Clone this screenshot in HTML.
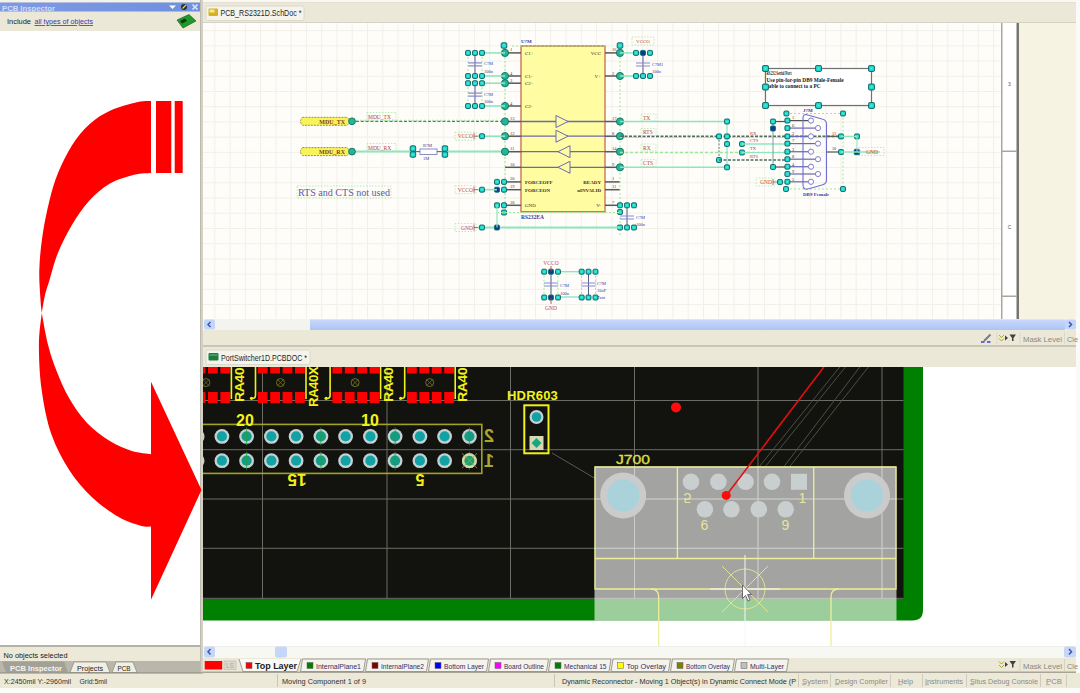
<!DOCTYPE html>
<html><head><meta charset="utf-8">
<style>
html,body{margin:0;padding:0;width:1080px;height:693px;overflow:hidden;background:#ece9d8;}
svg{display:block;font-family:"Liberation Sans",sans-serif;}
</style></head>
<body>
<svg width="1080" height="693" viewBox="0 0 1080 693">
<defs>
  <pattern id="sgrid" x="199.35" y="15.4" width="15.45" height="15.2" patternUnits="userSpaceOnUse">
    <rect width="15.45" height="15.2" fill="#fdfcf7"/>
    <path d="M15.45 0V15.2M0 15.2H15.45" stroke="#f2f0e8" stroke-width="1" fill="none"/>
  </pattern>
  <linearGradient id="titleg" x1="0" y1="0" x2="1" y2="0">
    <stop offset="0" stop-color="#7d9ae3"/><stop offset="1" stop-color="#6f8fe0"/>
  </linearGradient>
  <linearGradient id="thumbg" x1="0" y1="0" x2="0" y2="1"><stop offset="0" stop-color="#c8d8fb"/><stop offset="1" stop-color="#adc4f4"/></linearGradient>
</defs>

<!-- ===== base ===== -->
<rect x="0" y="0" width="1080" height="693" fill="#ece9d8"/>

<!-- ===== LEFT PANEL ===== -->
<rect x="0" y="0" width="200" height="2" fill="#f4f2ea"/>
<rect x="0" y="2.5" width="200" height="9.5" fill="url(#titleg)"/>
<text x="2" y="10.5" font-size="7.5" font-weight="bold" fill="#d4ddf8" textLength="53" lengthAdjust="spacingAndGlyphs">PCB Inspector</text>
<rect x="0" y="11.5" width="200" height="20" fill="#ebe8d8"/>
<rect x="0" y="31" width="200" height="614" fill="#ffffff"/>
<rect x="0" y="645" width="200" height="2" fill="#b5b2a5"/>
<rect x="0" y="647" width="200" height="14" fill="#ece9d8"/>
<rect x="0" y="661" width="200" height="12" fill="#b9b7ab"/>
<rect x="0" y="673" width="1080" height="15" fill="#ece9d8"/>
<rect x="0" y="688" width="1080" height="5" fill="#fbfbf8"/>

<!-- divider -->
<rect x="200" y="0" width="3" height="673" fill="#d4d1c4"/><rect x="200" y="0" width="1" height="673" fill="#bdbab0"/>

<!-- ===== SCHEMATIC DOC ===== -->
<rect x="203" y="0" width="877" height="2.5" fill="#f8f7f2"/>
<rect x="203" y="2.5" width="873" height="1.2" fill="#d5d2c4"/>
<rect x="203" y="3" width="873" height="19.5" fill="#ebe8d8"/>
<rect x="203" y="22" width="873" height="1" fill="#d6d3c6"/>
<rect x="203" y="23" width="799" height="296" fill="#fefdfa"/>
<path d="M214.80 23V319M230.07 23V319M245.34 23V319M260.61 23V319M275.88 23V319M291.15 23V319M306.42 23V319M321.69 23V319M336.96 23V319M352.23 23V319M367.50 23V319M382.77 23V319M398.04 23V319M413.31 23V319M428.58 23V319M443.85 23V319M459.12 23V319M474.39 23V319M489.66 23V319M504.93 23V319M520.20 23V319M535.47 23V319M550.74 23V319M566.01 23V319M581.28 23V319M596.55 23V319M611.82 23V319M627.09 23V319M642.36 23V319M657.63 23V319M672.90 23V319M688.17 23V319M703.44 23V319M718.71 23V319M733.98 23V319M749.25 23V319M764.52 23V319M779.79 23V319M795.06 23V319M810.33 23V319M825.60 23V319M840.87 23V319M856.14 23V319M871.41 23V319M886.68 23V319M901.95 23V319M917.22 23V319M932.49 23V319M947.76 23V319M963.03 23V319M978.30 23V319M993.57 23V319M203 30.60H1001M203 45.82H1001M203 61.04H1001M203 76.26H1001M203 91.48H1001M203 106.70H1001M203 121.92H1001M203 137.14H1001M203 152.36H1001M203 167.58H1001M203 182.80H1001M203 198.02H1001M203 213.24H1001M203 228.46H1001M203 243.68H1001M203 258.90H1001M203 274.12H1001M203 289.34H1001M203 304.56H1001" stroke="#f2f0e8" stroke-width="1" fill="none"/>
<rect x="1002" y="23" width="15" height="296" fill="#ffffff"/>
<rect x="1001" y="23" width="1.5" height="296" fill="#a8a8a0"/>
<rect x="1016.5" y="23" width="2.5" height="296" fill="#767670"/>
<rect x="1019" y="23" width="57" height="296" fill="#f6f3e2"/>
<rect x="1002" y="150.5" width="15" height="1.5" fill="#a8a8a0"/>
<rect x="1002" y="295.5" width="15" height="1.5" fill="#a8a8a0"/>
<rect x="1076" y="0" width="4" height="673" fill="#fafaf8"/>

<!-- scrollbar -->
<rect x="203" y="319" width="873" height="11" fill="#f3f3ef"/>
<rect x="310" y="319.5" width="755" height="10.5" fill="url(#thumbg)"/>
<rect x="204" y="319.5" width="11" height="10" rx="2" fill="#c3d5f9"/>
<rect x="1065" y="319.5" width="11" height="10" rx="2" fill="#c3d5f9"/>
<defs><radialGradient id="hg" cx="0.5" cy="0.5" r="0.6"><stop offset="0" stop-color="#3ef2e6"/><stop offset="0.6" stop-color="#22d2c6"/><stop offset="1" stop-color="#0e9c94"/></radialGradient></defs>
<path d="M302.5 117.3H347L351 121.3L347 125.3H302.5Q298.5 121.3 302.5 117.3Z" fill="#f7f35a" stroke="#a09040" stroke-width="1" stroke-dasharray="2 1"/>
<text x="345" y="123.5" font-size="6" fill="#8a3a1a" text-anchor="end" font-family="Liberation Serif" font-weight="bold">MDU_TX</text>
<path d="M302.5 147.6H347L351 151.6L347 155.6H302.5Q298.5 151.6 302.5 147.6Z" fill="#f7f35a" stroke="#a09040" stroke-width="1" stroke-dasharray="2 1"/>
<text x="345" y="153.79999999999998" font-size="6" fill="#8a3a1a" text-anchor="end" font-family="Liberation Serif" font-weight="bold">MDU_RX</text>
<circle cx="352" cy="121.3" r="3.4" fill="#27b49a" stroke="#0a6f5a" stroke-width="0.9"/>
<circle cx="352" cy="151.6" r="3.4" fill="#27b49a" stroke="#0a6f5a" stroke-width="0.9"/>
<line x1="356" y1="121.4" x2="505" y2="121.4" stroke="#5d7d6c" stroke-width="1.4" stroke-dasharray="3 1.8"/>
<line x1="356" y1="120.3" x2="505" y2="120.3" stroke="#9ee89a" stroke-width="1" stroke-dasharray="2 2"/>
<line x1="356" y1="151.6" x2="413" y2="151.6" stroke="#8ee6c0" stroke-width="2"/>
<line x1="445" y1="151.6" x2="505" y2="151.6" stroke="#8ee6c0" stroke-width="2"/>
<text x="368" y="119" font-size="5.5" fill="#b8402e" text-anchor="start" font-family="Liberation Serif">MDU_TX</text>
<text x="368" y="150" font-size="5.5" fill="#b8402e" text-anchor="start" font-family="Liberation Serif">MDU_RX</text>
<rect x="367" y="112.5" width="29" height="7.5" fill="none" stroke="#a6e8a0" stroke-width="0.8" stroke-dasharray="1.5 1.5"/>
<rect x="367" y="143.5" width="29" height="7.5" fill="none" stroke="#a6e8a0" stroke-width="0.8" stroke-dasharray="1.5 1.5"/>
<rect x="420" y="149" width="17" height="5.5" fill="#ffffff" stroke="#8080c0" stroke-width="0.9"/>
<line x1="413" y1="151.6" x2="420" y2="151.6" stroke="#606060" stroke-width="1"/>
<line x1="437" y1="151.6" x2="445" y2="151.6" stroke="#606060" stroke-width="1"/>
<rect x="410.2" y="145.8" width="5.5" height="5.5" rx="1.2" fill="url(#hg)" stroke="#0a6a66" stroke-width="0.9"/>
<rect x="410.2" y="151.8" width="5.5" height="5.5" rx="1.2" fill="url(#hg)" stroke="#0a6a66" stroke-width="0.9"/>
<rect x="442.2" y="145.8" width="5.5" height="5.5" rx="1.2" fill="url(#hg)" stroke="#0a6a66" stroke-width="0.9"/>
<rect x="442.2" y="151.8" width="5.5" height="5.5" rx="1.2" fill="url(#hg)" stroke="#0a6a66" stroke-width="0.9"/>
<text x="423" y="146.5" font-size="4.5" fill="#3a3aa0" text-anchor="start" font-family="Liberation Serif">R?M</text>
<text x="423" y="160" font-size="4.5" fill="#3a3aa0" text-anchor="start" font-family="Liberation Serif">1M</text>
<rect x="521" y="46" width="84" height="165.7" fill="#fffca2" stroke="#c87858" stroke-width="1.4"/>
<line x1="512" y1="46" x2="605" y2="46" stroke="#9ee89a" stroke-width="1" stroke-dasharray="2 2"/>
<line x1="521" y1="46" x2="605" y2="46" stroke="#b0a040" stroke-width="1.2" stroke-dasharray="2 2"/>
<text x="521" y="42.5" font-size="5" fill="#3a3aa0" text-anchor="start" font-family="Liberation Serif" font-weight="bold">U?M</text>
<text x="521" y="219" font-size="5.5" fill="#3a3aa0" text-anchor="start" font-family="Liberation Serif" font-weight="bold">RS232EA</text>
<line x1="505" y1="52.9" x2="521" y2="52.9" stroke="#585858" stroke-width="1.5"/>
<text x="510" y="51.4" font-size="4.5" fill="#404040" text-anchor="start" font-family="Liberation Serif">1</text>
<text x="525" y="54.9" font-size="5" fill="#303030" text-anchor="start" font-family="Liberation Serif">C1+</text>
<line x1="505" y1="76" x2="521" y2="76" stroke="#585858" stroke-width="1.5"/>
<text x="510" y="74.5" font-size="4.5" fill="#404040" text-anchor="start" font-family="Liberation Serif">4</text>
<text x="525" y="78" font-size="5" fill="#303030" text-anchor="start" font-family="Liberation Serif">C1-</text>
<line x1="505" y1="83.2" x2="521" y2="83.2" stroke="#585858" stroke-width="1.5"/>
<text x="510" y="81.7" font-size="4.5" fill="#404040" text-anchor="start" font-family="Liberation Serif">3</text>
<text x="525" y="85.2" font-size="5" fill="#303030" text-anchor="start" font-family="Liberation Serif">C2+</text>
<line x1="505" y1="106" x2="521" y2="106" stroke="#585858" stroke-width="1.5"/>
<text x="510" y="104.5" font-size="4.5" fill="#404040" text-anchor="start" font-family="Liberation Serif">4</text>
<text x="525" y="108" font-size="5" fill="#303030" text-anchor="start" font-family="Liberation Serif">C2-</text>
<line x1="505" y1="121.5" x2="521" y2="121.5" stroke="#585858" stroke-width="1.5"/>
<text x="510" y="120.0" font-size="4.5" fill="#404040" text-anchor="start" font-family="Liberation Serif">13</text>
<line x1="505" y1="136.2" x2="521" y2="136.2" stroke="#585858" stroke-width="1.5"/>
<text x="510" y="134.7" font-size="4.5" fill="#404040" text-anchor="start" font-family="Liberation Serif">12</text>
<line x1="505" y1="151.7" x2="521" y2="151.7" stroke="#585858" stroke-width="1.5"/>
<text x="510" y="150.2" font-size="4.5" fill="#404040" text-anchor="start" font-family="Liberation Serif">11</text>
<line x1="505" y1="167.3" x2="521" y2="167.3" stroke="#585858" stroke-width="1.5"/>
<text x="510" y="165.8" font-size="4.5" fill="#404040" text-anchor="start" font-family="Liberation Serif">10</text>
<line x1="505" y1="181.9" x2="521" y2="181.9" stroke="#585858" stroke-width="1.5"/>
<text x="510" y="180.4" font-size="4.5" fill="#404040" text-anchor="start" font-family="Liberation Serif">20</text>
<text x="525" y="183.9" font-size="5" fill="#303030" text-anchor="start" font-family="Liberation Serif" font-weight="bold">FORCEOFF</text>
<line x1="505" y1="189.7" x2="521" y2="189.7" stroke="#585858" stroke-width="1.5"/>
<text x="510" y="188.2" font-size="4.5" fill="#404040" text-anchor="start" font-family="Liberation Serif">19</text>
<text x="525" y="191.7" font-size="5" fill="#303030" text-anchor="start" font-family="Liberation Serif" font-weight="bold">FORCEON</text>
<line x1="505" y1="205.3" x2="521" y2="205.3" stroke="#585858" stroke-width="1.5"/>
<text x="510" y="203.8" font-size="4.5" fill="#404040" text-anchor="start" font-family="Liberation Serif">18</text>
<text x="525" y="207.3" font-size="5" fill="#303030" text-anchor="start" font-family="Liberation Serif">GND</text>
<line x1="605" y1="52.9" x2="620" y2="52.9" stroke="#585858" stroke-width="1.5"/>
<text x="612" y="51.4" font-size="4.5" fill="#404040" text-anchor="start" font-family="Liberation Serif">16</text>
<text x="601" y="54.9" font-size="5" fill="#303030" text-anchor="end" font-family="Liberation Serif">VCC</text>
<line x1="605" y1="76" x2="620" y2="76" stroke="#585858" stroke-width="1.5"/>
<text x="612" y="74.5" font-size="4.5" fill="#404040" text-anchor="start" font-family="Liberation Serif">2</text>
<text x="601" y="78" font-size="5" fill="#303030" text-anchor="end" font-family="Liberation Serif">V+</text>
<line x1="605" y1="121.5" x2="620" y2="121.5" stroke="#585858" stroke-width="1.5"/>
<text x="612" y="120.0" font-size="4.5" fill="#404040" text-anchor="start" font-family="Liberation Serif">17</text>
<line x1="605" y1="136.2" x2="620" y2="136.2" stroke="#585858" stroke-width="1.5"/>
<text x="612" y="134.7" font-size="4.5" fill="#404040" text-anchor="start" font-family="Liberation Serif">8</text>
<line x1="605" y1="151.7" x2="620" y2="151.7" stroke="#585858" stroke-width="1.5"/>
<text x="612" y="150.2" font-size="4.5" fill="#404040" text-anchor="start" font-family="Liberation Serif">14</text>
<line x1="605" y1="167.3" x2="620" y2="167.3" stroke="#585858" stroke-width="1.5"/>
<text x="612" y="165.8" font-size="4.5" fill="#404040" text-anchor="start" font-family="Liberation Serif">9</text>
<line x1="605" y1="181.9" x2="620" y2="181.9" stroke="#585858" stroke-width="1.5"/>
<text x="612" y="180.4" font-size="4.5" fill="#404040" text-anchor="start" font-family="Liberation Serif">1</text>
<text x="601" y="183.9" font-size="5" fill="#303030" text-anchor="end" font-family="Liberation Serif" font-weight="bold">READY</text>
<line x1="605" y1="189.7" x2="620" y2="189.7" stroke="#585858" stroke-width="1.5"/>
<text x="612" y="188.2" font-size="4.5" fill="#404040" text-anchor="start" font-family="Liberation Serif">11</text>
<text x="601" y="191.7" font-size="5" fill="#303030" text-anchor="end" font-family="Liberation Serif" font-weight="bold">nINVALID</text>
<line x1="605" y1="205.3" x2="620" y2="205.3" stroke="#585858" stroke-width="1.5"/>
<text x="612" y="203.8" font-size="4.5" fill="#404040" text-anchor="start" font-family="Liberation Serif">7</text>
<text x="601" y="207.3" font-size="5" fill="#303030" text-anchor="end" font-family="Liberation Serif">V-</text>
<line x1="521" y1="121.5" x2="605" y2="121.5" stroke="#6a6ab0" stroke-width="1.3"/>
<line x1="521" y1="136.2" x2="605" y2="136.2" stroke="#6a6ab0" stroke-width="1.3"/>
<line x1="521" y1="151.7" x2="605" y2="151.7" stroke="#6a6ab0" stroke-width="1.3"/>
<line x1="521" y1="167.3" x2="605" y2="167.3" stroke="#6a6ab0" stroke-width="1.3"/>
<path d="M556 115.5L568 121.5L556 127.5Z" fill="#fffca2" stroke="#6a6ab0" stroke-width="1"/>
<path d="M556 130.2L568 136.2L556 142.2Z" fill="#fffca2" stroke="#6a6ab0" stroke-width="1"/>
<path d="M570 145.7L558 151.7L570 157.7Z" fill="#fffca2" stroke="#6a6ab0" stroke-width="1"/>
<path d="M570 161.3L558 167.3L570 173.3Z" fill="#fffca2" stroke="#6a6ab0" stroke-width="1"/>
<line x1="505" y1="45" x2="505" y2="215" stroke="#9ee89a" stroke-width="1" stroke-dasharray="2 2"/>
<line x1="620" y1="45" x2="620" y2="235" stroke="#9ee89a" stroke-width="1" stroke-dasharray="2 2"/>
<rect x="501.2" y="42.7" width="5.6" height="5.6" rx="1.2" fill="url(#hg)" stroke="#0a6a66" stroke-width="0.9"/>
<circle cx="505" cy="52.9" r="3.6" fill="#27b49a" stroke="#0a6f5a" stroke-width="0.9"/>
<circle cx="505" cy="76" r="3.6" fill="#27b49a" stroke="#0a6f5a" stroke-width="0.9"/>
<circle cx="505" cy="83.2" r="3.6" fill="#27b49a" stroke="#0a6f5a" stroke-width="0.9"/>
<circle cx="505" cy="106" r="3.6" fill="#27b49a" stroke="#0a6f5a" stroke-width="0.9"/>
<circle cx="505" cy="121.5" r="3.6" fill="#27b49a" stroke="#0a6f5a" stroke-width="0.9"/>
<circle cx="505" cy="136.2" r="3.6" fill="#27b49a" stroke="#0a6f5a" stroke-width="0.9"/>
<circle cx="505" cy="151.7" r="3.6" fill="#27b49a" stroke="#0a6f5a" stroke-width="0.9"/>
<rect x="494.5" y="179.4" width="5.0" height="5.0" rx="1.2" fill="url(#hg)" stroke="#0a6a66" stroke-width="0.9"/>
<rect x="501.5" y="179.4" width="5.0" height="5.0" rx="1.2" fill="url(#hg)" stroke="#0a6a66" stroke-width="0.9"/>
<rect x="494.5" y="187.2" width="5.0" height="5.0" rx="1.2" fill="#0b3d8a" stroke="#0a6f78" stroke-width="0.9"/>
<rect x="501.5" y="187.2" width="5.0" height="5.0" rx="1.2" fill="url(#hg)" stroke="#0a6a66" stroke-width="0.9"/>
<rect x="494.5" y="202.8" width="5.0" height="5.0" rx="1.2" fill="url(#hg)" stroke="#0a6a66" stroke-width="0.9"/>
<rect x="501.5" y="202.8" width="5.0" height="5.0" rx="1.2" fill="url(#hg)" stroke="#0a6a66" stroke-width="0.9"/>
<rect x="501.5" y="210.0" width="5.0" height="5.0" rx="1.2" fill="url(#hg)" stroke="#0a6a66" stroke-width="0.9"/>
<rect x="617.2" y="42.7" width="5.6" height="5.6" rx="1.2" fill="url(#hg)" stroke="#0a6a66" stroke-width="0.9"/>
<circle cx="620" cy="52.9" r="3.6" fill="#27b49a" stroke="#0a6f5a" stroke-width="0.9"/>
<circle cx="620" cy="76" r="3.6" fill="#27b49a" stroke="#0a6f5a" stroke-width="0.9"/>
<circle cx="620" cy="121.5" r="3.6" fill="#27b49a" stroke="#0a6f5a" stroke-width="0.9"/>
<circle cx="620" cy="136.2" r="3.6" fill="#27b49a" stroke="#0a6f5a" stroke-width="0.9"/>
<circle cx="620" cy="151.7" r="3.6" fill="#27b49a" stroke="#0a6f5a" stroke-width="0.9"/>
<circle cx="620" cy="167.3" r="3.6" fill="#27b49a" stroke="#0a6f5a" stroke-width="0.9"/>
<rect x="617.5" y="202.8" width="5.0" height="5.0" rx="1.2" fill="url(#hg)" stroke="#0a6a66" stroke-width="0.9"/>
<line x1="482" y1="52.9" x2="505" y2="52.9" stroke="#8ee6c0" stroke-width="1.6"/>
<line x1="482" y1="76" x2="505" y2="76" stroke="#8ee6c0" stroke-width="1.6"/>
<line x1="475" y1="52.9" x2="475" y2="76" stroke="#5a5a8a" stroke-width="1"/>
<path d="M468 62.95H482M468 65.95H482" stroke="#8888d8" stroke-width="1.2"/>
<line x1="468" y1="52.9" x2="468" y2="76" stroke="#9ee89a" stroke-width="1" stroke-dasharray="2 2"/>
<line x1="482" y1="52.9" x2="482" y2="76" stroke="#9ee89a" stroke-width="1" stroke-dasharray="2 2"/>
<rect x="465.5" y="50.4" width="5.0" height="5.0" rx="1.2" fill="url(#hg)" stroke="#0a6a66" stroke-width="0.9"/>
<rect x="472.5" y="50.4" width="5.0" height="5.0" rx="1.2" fill="url(#hg)" stroke="#0a6a66" stroke-width="0.9"/>
<rect x="479.5" y="50.4" width="5.0" height="5.0" rx="1.2" fill="url(#hg)" stroke="#0a6a66" stroke-width="0.9"/>
<rect x="465.5" y="73.5" width="5.0" height="5.0" rx="1.2" fill="url(#hg)" stroke="#0a6a66" stroke-width="0.9"/>
<rect x="472.5" y="73.5" width="5.0" height="5.0" rx="1.2" fill="url(#hg)" stroke="#0a6a66" stroke-width="0.9"/>
<rect x="479.5" y="73.5" width="5.0" height="5.0" rx="1.2" fill="url(#hg)" stroke="#0a6a66" stroke-width="0.9"/>
<text x="484" y="65.45" font-size="4.5" fill="#3a3aa0" text-anchor="start" font-family="Liberation Serif">C?M</text>
<text x="484" y="72.95" font-size="4.5" fill="#3a3aa0" text-anchor="start" font-family="Liberation Serif">100n</text>
<line x1="482" y1="83.2" x2="505" y2="83.2" stroke="#8ee6c0" stroke-width="1.6"/>
<line x1="482" y1="106" x2="505" y2="106" stroke="#8ee6c0" stroke-width="1.6"/>
<line x1="475" y1="83.2" x2="475" y2="106" stroke="#5a5a8a" stroke-width="1"/>
<path d="M468 93.1H482M468 96.1H482" stroke="#8888d8" stroke-width="1.2"/>
<line x1="468" y1="83.2" x2="468" y2="106" stroke="#9ee89a" stroke-width="1" stroke-dasharray="2 2"/>
<line x1="482" y1="83.2" x2="482" y2="106" stroke="#9ee89a" stroke-width="1" stroke-dasharray="2 2"/>
<rect x="465.5" y="80.7" width="5.0" height="5.0" rx="1.2" fill="url(#hg)" stroke="#0a6a66" stroke-width="0.9"/>
<rect x="472.5" y="80.7" width="5.0" height="5.0" rx="1.2" fill="url(#hg)" stroke="#0a6a66" stroke-width="0.9"/>
<rect x="479.5" y="80.7" width="5.0" height="5.0" rx="1.2" fill="url(#hg)" stroke="#0a6a66" stroke-width="0.9"/>
<rect x="465.5" y="103.5" width="5.0" height="5.0" rx="1.2" fill="url(#hg)" stroke="#0a6a66" stroke-width="0.9"/>
<rect x="472.5" y="103.5" width="5.0" height="5.0" rx="1.2" fill="url(#hg)" stroke="#0a6a66" stroke-width="0.9"/>
<rect x="479.5" y="103.5" width="5.0" height="5.0" rx="1.2" fill="url(#hg)" stroke="#0a6a66" stroke-width="0.9"/>
<text x="484" y="95.6" font-size="4.5" fill="#3a3aa0" text-anchor="start" font-family="Liberation Serif">C?M</text>
<text x="484" y="103.1" font-size="4.5" fill="#3a3aa0" text-anchor="start" font-family="Liberation Serif">100n</text>
<line x1="620" y1="52.9" x2="643" y2="52.9" stroke="#8ee6c0" stroke-width="1.6"/>
<line x1="620" y1="76" x2="643" y2="76" stroke="#8ee6c0" stroke-width="1.6"/>
<line x1="643" y1="52.9" x2="643" y2="76" stroke="#5a5a8a" stroke-width="1"/>
<path d="M636 63H650M636 66H650" stroke="#8888d8" stroke-width="1.2"/>
<rect x="633.5" y="50.4" width="5.0" height="5.0" rx="1.2" fill="url(#hg)" stroke="#0a6a66" stroke-width="0.9"/>
<rect x="640.5" y="50.4" width="5.0" height="5.0" rx="1.2" fill="#0b3d8a" stroke="#0a6f78" stroke-width="0.9"/>
<rect x="647.5" y="50.4" width="5.0" height="5.0" rx="1.2" fill="url(#hg)" stroke="#0a6a66" stroke-width="0.9"/>
<rect x="633.5" y="73.5" width="5.0" height="5.0" rx="1.2" fill="url(#hg)" stroke="#0a6a66" stroke-width="0.9"/>
<rect x="640.5" y="73.5" width="5.0" height="5.0" rx="1.2" fill="url(#hg)" stroke="#0a6a66" stroke-width="0.9"/>
<rect x="647.5" y="73.5" width="5.0" height="5.0" rx="1.2" fill="url(#hg)" stroke="#0a6a66" stroke-width="0.9"/>
<text x="652" y="66" font-size="4.5" fill="#3a3aa0" text-anchor="start" font-family="Liberation Serif">C?M1</text>
<text x="652" y="73" font-size="4.5" fill="#3a3aa0" text-anchor="start" font-family="Liberation Serif">100n</text>
<text x="643" y="43" font-size="5" fill="#c04a3a" text-anchor="middle" font-family="Liberation Serif">VCCO</text>
<rect x="632" y="37" width="22" height="8" fill="none" stroke="#a6e8a0" stroke-width="0.8" stroke-dasharray="1.5 1.5"/>
<line x1="627" y1="205.3" x2="627" y2="227.5" stroke="#5a5a8a" stroke-width="1"/>
<path d="M620 216H634M620 219H634" stroke="#8888d8" stroke-width="1.2"/>
<rect x="624.5" y="202.8" width="5.0" height="5.0" rx="1.2" fill="url(#hg)" stroke="#0a6a66" stroke-width="0.9"/>
<rect x="631.5" y="202.8" width="5.0" height="5.0" rx="1.2" fill="url(#hg)" stroke="#0a6a66" stroke-width="0.9"/>
<rect x="617.5" y="209.5" width="5.0" height="5.0" rx="1.2" fill="url(#hg)" stroke="#0a6a66" stroke-width="0.9"/>
<rect x="617.5" y="225.0" width="5.0" height="5.0" rx="1.2" fill="url(#hg)" stroke="#0a6a66" stroke-width="0.9"/>
<rect x="624.5" y="225.0" width="5.0" height="5.0" rx="1.2" fill="url(#hg)" stroke="#0a6a66" stroke-width="0.9"/>
<rect x="631.5" y="225.0" width="5.0" height="5.0" rx="1.2" fill="url(#hg)" stroke="#0a6a66" stroke-width="0.9"/>
<text x="636" y="219" font-size="4.5" fill="#3a3aa0" text-anchor="start" font-family="Liberation Serif">C?M</text>
<text x="636" y="226" font-size="4.5" fill="#3a3aa0" text-anchor="start" font-family="Liberation Serif">100n</text>
<rect x="455" y="132.2" width="21" height="8" fill="none" stroke="#a6e8a0" stroke-width="0.8" stroke-dasharray="1.5 1.5"/>
<text x="473" y="138.2" font-size="5.5" fill="#c04a3a" text-anchor="end" font-family="Liberation Serif">VCCO</text>
<path d="M474 133.2V139.2M474 136.2H479" stroke="#a04a3a" stroke-width="0.8" fill="none"/>
<line x1="478" y1="136.2" x2="505" y2="136.2" stroke="#8ee6c0" stroke-width="1.6"/>
<rect x="479.5" y="133.7" width="5.0" height="5.0" rx="1.2" fill="url(#hg)" stroke="#0a6a66" stroke-width="0.9"/>
<rect x="455" y="185.7" width="21" height="8" fill="none" stroke="#a6e8a0" stroke-width="0.8" stroke-dasharray="1.5 1.5"/>
<text x="473" y="191.7" font-size="5.5" fill="#c04a3a" text-anchor="end" font-family="Liberation Serif">VCCO</text>
<path d="M474 186.7V192.7M474 189.7H479" stroke="#a04a3a" stroke-width="0.8" fill="none"/>
<line x1="478" y1="189.7" x2="497" y2="189.7" stroke="#8ee6c0" stroke-width="1.6"/>
<rect x="479.5" y="187.2" width="5.0" height="5.0" rx="1.2" fill="url(#hg)" stroke="#0a6a66" stroke-width="0.9"/>
<rect x="455" y="223.5" width="21" height="8" fill="none" stroke="#a6e8a0" stroke-width="0.8" stroke-dasharray="1.5 1.5"/>
<text x="473" y="229.5" font-size="5.5" fill="#c04a3a" text-anchor="end" font-family="Liberation Serif">GND</text>
<path d="M474 224.5V230.5M474 227.5H479" stroke="#a04a3a" stroke-width="0.8" fill="none"/>
<line x1="478" y1="227.5" x2="620" y2="227.5" stroke="#8ee6c0" stroke-width="1.8"/>
<rect x="479.5" y="225.0" width="5.0" height="5.0" rx="1.2" fill="url(#hg)" stroke="#0a6a66" stroke-width="0.9"/>
<rect x="494.5" y="225.0" width="5.0" height="5.0" rx="1.2" fill="#0b3d8a" stroke="#0a6f78" stroke-width="0.9"/>
<line x1="497" y1="205.3" x2="497" y2="227.5" stroke="#8ee6c0" stroke-width="1.2"/>
<line x1="497" y1="212.5" x2="620" y2="212.5" stroke="#9ee89a" stroke-width="1" stroke-dasharray="2 2"/>
<text x="298" y="196" font-size="11" fill="#5660a4" font-family="Liberation Serif" textLength="92" lengthAdjust="spacingAndGlyphs">RTS and CTS not used</text>
<rect x="297" y="186" width="94" height="12" fill="none" stroke="#a6e8a0" stroke-width="0.8" stroke-dasharray="1.5 1.5"/>
<line x1="620" y1="121.5" x2="727" y2="121.5" stroke="#8ee6c0" stroke-width="1.6"/>
<line x1="620" y1="136.4" x2="840" y2="136.4" stroke="#4d6d5d" stroke-width="1.6" stroke-dasharray="3 1.5"/>
<line x1="620" y1="137.5" x2="840" y2="137.5" stroke="#9ee89a" stroke-width="1" stroke-dasharray="2 2"/>
<line x1="620" y1="152.5" x2="742" y2="152.5" stroke="#9ee89a" stroke-width="1.4" stroke-dasharray="3 2"/>
<line x1="620" y1="167.3" x2="727" y2="167.3" stroke="#8ee6c0" stroke-width="1.6"/>
<text x="643" y="119.5" font-size="5.5" fill="#b8402e" text-anchor="start" font-family="Liberation Serif">TX</text>
<text x="643" y="134" font-size="5.5" fill="#b8402e" text-anchor="start" font-family="Liberation Serif">RTS</text>
<text x="643" y="149.5" font-size="5.5" fill="#b8402e" text-anchor="start" font-family="Liberation Serif">RX</text>
<text x="643" y="165" font-size="5.5" fill="#b8402e" text-anchor="start" font-family="Liberation Serif">CTS</text>
<rect x="641" y="114" width="15" height="7" fill="none" stroke="#a6e8a0" stroke-width="0.7" stroke-dasharray="1.5 1.5"/>
<rect x="641" y="128.5" width="15" height="7" fill="none" stroke="#a6e8a0" stroke-width="0.7" stroke-dasharray="1.5 1.5"/>
<rect x="641" y="144" width="15" height="7" fill="none" stroke="#a6e8a0" stroke-width="0.7" stroke-dasharray="1.5 1.5"/>
<rect x="641" y="159.5" width="15" height="7" fill="none" stroke="#a6e8a0" stroke-width="0.7" stroke-dasharray="1.5 1.5"/>
<line x1="727" y1="121.5" x2="727" y2="167.3" stroke="#8ee6c0" stroke-width="1.2"/>
<line x1="719" y1="136.4" x2="719" y2="160" stroke="#5d7d6c" stroke-width="1" stroke-dasharray="2 1.5"/>
<rect x="724.5" y="119.0" width="5.0" height="5.0" rx="1.2" fill="url(#hg)" stroke="#0a6a66" stroke-width="0.9"/>
<rect x="716.5" y="133.9" width="5.0" height="5.0" rx="1.2" fill="url(#hg)" stroke="#0a6a66" stroke-width="0.9"/>
<rect x="724.5" y="133.9" width="5.0" height="5.0" rx="1.2" fill="url(#hg)" stroke="#0a6a66" stroke-width="0.9"/>
<rect x="724.5" y="141.5" width="5.0" height="5.0" rx="1.2" fill="url(#hg)" stroke="#0a6a66" stroke-width="0.9"/>
<rect x="739.5" y="141.5" width="5.0" height="5.0" rx="1.2" fill="url(#hg)" stroke="#0a6a66" stroke-width="0.9"/>
<rect x="739.5" y="150.0" width="5.0" height="5.0" rx="1.2" fill="url(#hg)" stroke="#0a6a66" stroke-width="0.9"/>
<rect x="716.5" y="157.5" width="5.0" height="5.0" rx="1.2" fill="url(#hg)" stroke="#0a6a66" stroke-width="0.9"/>
<rect x="724.5" y="164.8" width="5.0" height="5.0" rx="1.2" fill="url(#hg)" stroke="#0a6a66" stroke-width="0.9"/>
<line x1="742" y1="144" x2="788" y2="144" stroke="#8ee6c0" stroke-width="1.6"/>
<line x1="742" y1="152.5" x2="788" y2="152.5" stroke="#9ee89a" stroke-width="1.6" stroke-dasharray="3 2"/>
<line x1="742" y1="152.5" x2="788" y2="152.5" stroke="#8ee6c0" stroke-width="1.0"/>
<line x1="719" y1="160" x2="788" y2="160" stroke="#4d6d5d" stroke-width="1.6" stroke-dasharray="3 1.5"/>
<line x1="773" y1="121.5" x2="787" y2="121.5" stroke="#505050" stroke-width="1.2"/>
<line x1="773" y1="167" x2="787" y2="167" stroke="#505050" stroke-width="1.2"/>
<text x="750" y="134.5" font-size="4.6" fill="#b8402e" text-anchor="start" font-family="Liberation Serif">RX</text>
<text x="750" y="142" font-size="4.6" fill="#b8402e" text-anchor="start" font-family="Liberation Serif">CTS</text>
<text x="750" y="150" font-size="4.6" fill="#b8402e" text-anchor="start" font-family="Liberation Serif">TX</text>
<text x="750" y="157.5" font-size="4.6" fill="#b8402e" text-anchor="start" font-family="Liberation Serif">RTS</text>
<line x1="773" y1="121.5" x2="773" y2="167" stroke="#7aa0a0" stroke-width="1"/>
<rect x="770.5" y="119.0" width="5.0" height="5.0" rx="1.2" fill="url(#hg)" stroke="#0a6a66" stroke-width="0.9"/>
<rect x="770.5" y="126.0" width="5.0" height="5.0" rx="1.2" fill="#0b3d8a" stroke="#0a6f78" stroke-width="0.9"/>
<rect x="770.5" y="164.5" width="5.0" height="5.0" rx="1.2" fill="url(#hg)" stroke="#0a6a66" stroke-width="0.9"/>
<rect x="756" y="178" width="19" height="8" fill="none" stroke="#a6e8a0" stroke-width="0.8" stroke-dasharray="1.5 1.5"/>
<text x="772" y="184" font-size="5.5" fill="#c04a3a" text-anchor="end" font-family="Liberation Serif">GND</text>
<path d="M773 179V185M773 182H778" stroke="#a04a3a" stroke-width="0.8" fill="none"/>
<line x1="775" y1="182" x2="787" y2="182" stroke="#8ee6c0" stroke-width="1.4"/>
<rect x="777.5" y="179.5" width="5.0" height="5.0" rx="1.2" fill="url(#hg)" stroke="#0a6a66" stroke-width="0.9"/>
<rect x="765.5" y="68.5" width="106" height="37" fill="#ffffff" stroke="#707070" stroke-width="1.2"/>
<text x="766.5" y="75" font-size="6" fill="#181818" font-family="Liberation Serif" font-weight="bold" textLength="25" lengthAdjust="spacingAndGlyphs">RS232 Serial Port</text>
<text x="766.5" y="81.5" font-size="6" fill="#181818" font-family="Liberation Serif" font-weight="bold" textLength="77" lengthAdjust="spacingAndGlyphs">Use pin-for-pin DB9 Male-Female</text>
<text x="766.5" y="88" font-size="6" fill="#181818" font-family="Liberation Serif" font-weight="bold" textLength="54" lengthAdjust="spacingAndGlyphs">cable to connect to a PC</text>
<rect x="762.5" y="65.5" width="6" height="6" rx="1.2" fill="url(#hg)" stroke="#0a6a66" stroke-width="0.9"/>
<rect x="815.5" y="65.5" width="6" height="6" rx="1.2" fill="url(#hg)" stroke="#0a6a66" stroke-width="0.9"/>
<rect x="868.5" y="65.5" width="6" height="6" rx="1.2" fill="url(#hg)" stroke="#0a6a66" stroke-width="0.9"/>
<rect x="762.5" y="84.0" width="6" height="6" rx="1.2" fill="url(#hg)" stroke="#0a6a66" stroke-width="0.9"/>
<rect x="868.5" y="84.0" width="6" height="6" rx="1.2" fill="url(#hg)" stroke="#0a6a66" stroke-width="0.9"/>
<rect x="762.5" y="102.5" width="6" height="6" rx="1.2" fill="url(#hg)" stroke="#0a6a66" stroke-width="0.9"/>
<rect x="815.5" y="102.5" width="6" height="6" rx="1.2" fill="url(#hg)" stroke="#0a6a66" stroke-width="0.9"/>
<rect x="868.5" y="102.5" width="6" height="6" rx="1.2" fill="url(#hg)" stroke="#0a6a66" stroke-width="0.9"/>
<line x1="786" y1="113.5" x2="843" y2="113.5" stroke="#9ee89a" stroke-width="1" stroke-dasharray="2 2"/>
<line x1="786" y1="189" x2="843" y2="189" stroke="#9ee89a" stroke-width="1" stroke-dasharray="2 2"/>
<line x1="843" y1="113.5" x2="843" y2="189" stroke="#9ee89a" stroke-width="1" stroke-dasharray="2 2"/>
<line x1="787" y1="120.6" x2="808.5" y2="120.6" stroke="#505050" stroke-width="1.2"/>
<circle cx="811" cy="120.6" r="2.6" fill="#ffffff" stroke="#7070d0" stroke-width="0.9"/>
<text x="792" y="119.39999999999999" font-size="4.2" fill="#303030" text-anchor="start" font-family="Liberation Serif">1</text>
<line x1="787" y1="128.1" x2="815.5" y2="128.1" stroke="#6a6ab0" stroke-width="1.2"/>
<circle cx="818" cy="128.1" r="2.6" fill="#ffffff" stroke="#7070d0" stroke-width="0.9"/>
<text x="792" y="126.89999999999999" font-size="4.2" fill="#303030" text-anchor="start" font-family="Liberation Serif">6</text>
<line x1="787" y1="136.4" x2="808.5" y2="136.4" stroke="#6a6ab0" stroke-width="1.2"/>
<circle cx="811" cy="136.4" r="2.6" fill="#ffffff" stroke="#7070d0" stroke-width="0.9"/>
<text x="792" y="135.20000000000002" font-size="4.2" fill="#303030" text-anchor="start" font-family="Liberation Serif">2</text>
<line x1="787" y1="143.6" x2="815.5" y2="143.6" stroke="#6a6ab0" stroke-width="1.2"/>
<circle cx="818" cy="143.6" r="2.6" fill="#ffffff" stroke="#7070d0" stroke-width="0.9"/>
<text x="792" y="142.4" font-size="4.2" fill="#303030" text-anchor="start" font-family="Liberation Serif">7</text>
<line x1="787" y1="151.7" x2="808.5" y2="151.7" stroke="#6a6ab0" stroke-width="1.2"/>
<circle cx="811" cy="151.7" r="2.6" fill="#ffffff" stroke="#7070d0" stroke-width="0.9"/>
<text x="792" y="150.5" font-size="4.2" fill="#303030" text-anchor="start" font-family="Liberation Serif">3</text>
<line x1="787" y1="159.2" x2="815.5" y2="159.2" stroke="#6a6ab0" stroke-width="1.2"/>
<circle cx="818" cy="159.2" r="2.6" fill="#ffffff" stroke="#7070d0" stroke-width="0.9"/>
<text x="792" y="158.0" font-size="4.2" fill="#303030" text-anchor="start" font-family="Liberation Serif">8</text>
<line x1="787" y1="166.7" x2="808.5" y2="166.7" stroke="#6a6ab0" stroke-width="1.2"/>
<circle cx="811" cy="166.7" r="2.6" fill="#ffffff" stroke="#7070d0" stroke-width="0.9"/>
<text x="792" y="165.5" font-size="4.2" fill="#303030" text-anchor="start" font-family="Liberation Serif">4</text>
<line x1="787" y1="174" x2="815.5" y2="174" stroke="#6a6ab0" stroke-width="1.2"/>
<circle cx="818" cy="174" r="2.6" fill="#ffffff" stroke="#7070d0" stroke-width="0.9"/>
<text x="792" y="172.8" font-size="4.2" fill="#303030" text-anchor="start" font-family="Liberation Serif">9</text>
<line x1="787" y1="181.8" x2="808.5" y2="181.8" stroke="#6a6ab0" stroke-width="1.2"/>
<circle cx="811" cy="181.8" r="2.6" fill="#ffffff" stroke="#7070d0" stroke-width="0.9"/>
<text x="792" y="180.60000000000002" font-size="4.2" fill="#303030" text-anchor="start" font-family="Liberation Serif">5</text>
<path d="M806 114.5Q803 114.5 803 118V185Q803 189.3 807 189.3L822 185Q826.5 184 826.5 180V124Q826.5 120 822 119Z" fill="none" stroke="#7070d0" stroke-width="1.1"/>
<rect x="784.9" y="118.1" width="5.0" height="5.0" rx="1.2" fill="url(#hg)" stroke="#0a6a66" stroke-width="0.9"/>
<rect x="784.9" y="125.6" width="5.0" height="5.0" rx="1.2" fill="url(#hg)" stroke="#0a6a66" stroke-width="0.9"/>
<rect x="784.9" y="133.9" width="5.0" height="5.0" rx="1.2" fill="url(#hg)" stroke="#0a6a66" stroke-width="0.9"/>
<rect x="784.9" y="141.1" width="5.0" height="5.0" rx="1.2" fill="url(#hg)" stroke="#0a6a66" stroke-width="0.9"/>
<rect x="784.9" y="149.2" width="5.0" height="5.0" rx="1.2" fill="url(#hg)" stroke="#0a6a66" stroke-width="0.9"/>
<rect x="784.9" y="156.7" width="5.0" height="5.0" rx="1.2" fill="url(#hg)" stroke="#0a6a66" stroke-width="0.9"/>
<rect x="784.9" y="164.2" width="5.0" height="5.0" rx="1.2" fill="url(#hg)" stroke="#0a6a66" stroke-width="0.9"/>
<rect x="784.9" y="171.5" width="5.0" height="5.0" rx="1.2" fill="url(#hg)" stroke="#0a6a66" stroke-width="0.9"/>
<rect x="784.9" y="179.3" width="5.0" height="5.0" rx="1.2" fill="url(#hg)" stroke="#0a6a66" stroke-width="0.9"/>
<rect x="783.9" y="111.0" width="5.0" height="5.0" rx="1.2" fill="url(#hg)" stroke="#0a6a66" stroke-width="0.9"/>
<rect x="840.5" y="111.0" width="5.0" height="5.0" rx="1.2" fill="url(#hg)" stroke="#0a6a66" stroke-width="0.9"/>
<rect x="783.5" y="186.5" width="5.0" height="5.0" rx="1.2" fill="url(#hg)" stroke="#0a6a66" stroke-width="0.9"/>
<rect x="840.5" y="186.5" width="5.0" height="5.0" rx="1.2" fill="url(#hg)" stroke="#0a6a66" stroke-width="0.9"/>
<line x1="826.5" y1="136.4" x2="841" y2="136.4" stroke="#606060" stroke-width="1.3"/>
<line x1="826.5" y1="152" x2="841" y2="152" stroke="#606060" stroke-width="1.3"/>
<text x="832" y="134.5" font-size="4.2" fill="#303030" text-anchor="start" font-family="Liberation Serif">11</text>
<text x="832" y="150" font-size="4.2" fill="#303030" text-anchor="start" font-family="Liberation Serif">10</text>
<rect x="838.5" y="133.9" width="5.0" height="5.0" rx="1.2" fill="url(#hg)" stroke="#0a6a66" stroke-width="0.9"/>
<rect x="838.5" y="149.5" width="5.0" height="5.0" rx="1.2" fill="url(#hg)" stroke="#0a6a66" stroke-width="0.9"/>
<rect x="854.5" y="133.9" width="5.0" height="5.0" rx="1.2" fill="url(#hg)" stroke="#0a6a66" stroke-width="0.9"/>
<rect x="854.2" y="149.2" width="5.5" height="5.5" rx="1.2" fill="#0b3d8a" stroke="#0a6f78" stroke-width="0.9"/>
<line x1="841" y1="136.4" x2="857" y2="136.4" stroke="#8ee6c0" stroke-width="1.4"/>
<line x1="841" y1="152" x2="880" y2="152" stroke="#8ee6c0" stroke-width="1.4"/>
<line x1="857" y1="136.4" x2="857" y2="152" stroke="#8ee6c0" stroke-width="1"/>
<text x="872" y="154" font-size="5.5" fill="#c04a3a" text-anchor="middle" font-family="Liberation Serif">GND</text>
<rect x="859" y="147.5" width="25" height="8" fill="none" stroke="#a6e8a0" stroke-width="0.8" stroke-dasharray="1.5 1.5"/>
<text x="803" y="112" font-size="5" fill="#3a3aa0" text-anchor="start" font-family="Liberation Serif" font-weight="bold">J?M</text>
<text x="803" y="195.5" font-size="5" fill="#3a3aa0" text-anchor="start" font-family="Liberation Serif" font-weight="bold">DB9 Female</text>
<line x1="551" y1="271.7" x2="551" y2="297.5" stroke="#5a5a8a" stroke-width="1"/>
<path d="M544 283H558M544 286H558" stroke="#8888d8" stroke-width="1.2"/>
<line x1="544" y1="271.7" x2="544" y2="297.5" stroke="#9ee89a" stroke-width="1" stroke-dasharray="2 2"/>
<line x1="558" y1="271.7" x2="558" y2="297.5" stroke="#9ee89a" stroke-width="1" stroke-dasharray="2 2"/>
<line x1="588.5" y1="271.7" x2="588.5" y2="297.5" stroke="#5a5a8a" stroke-width="1"/>
<path d="M581.5 283H595.5M581.5 286H595.5" stroke="#8888d8" stroke-width="1.2"/>
<line x1="581.5" y1="271.7" x2="581.5" y2="297.5" stroke="#9ee89a" stroke-width="1" stroke-dasharray="2 2"/>
<line x1="595.5" y1="271.7" x2="595.5" y2="297.5" stroke="#9ee89a" stroke-width="1" stroke-dasharray="2 2"/>
<line x1="558" y1="271.7" x2="581.7" y2="271.7" stroke="#8ee6c0" stroke-width="1.4"/>
<line x1="558" y1="297" x2="581.7" y2="297" stroke="#8ee6c0" stroke-width="1.4"/>
<rect x="541.7" y="269.2" width="5.0" height="5.0" rx="1.2" fill="url(#hg)" stroke="#0a6a66" stroke-width="0.9"/>
<rect x="548.5" y="269.2" width="5.0" height="5.0" rx="1.2" fill="#0b3d8a" stroke="#0a6f78" stroke-width="0.9"/>
<rect x="555.5" y="269.2" width="5.0" height="5.0" rx="1.2" fill="url(#hg)" stroke="#0a6a66" stroke-width="0.9"/>
<rect x="541.7" y="295.0" width="5.0" height="5.0" rx="1.2" fill="url(#hg)" stroke="#0a6a66" stroke-width="0.9"/>
<rect x="548.5" y="295.0" width="5.0" height="5.0" rx="1.2" fill="#0b3d8a" stroke="#0a6f78" stroke-width="0.9"/>
<rect x="555.5" y="295.0" width="5.0" height="5.0" rx="1.2" fill="url(#hg)" stroke="#0a6a66" stroke-width="0.9"/>
<rect x="579.2" y="269.2" width="5.0" height="5.0" rx="1.2" fill="url(#hg)" stroke="#0a6a66" stroke-width="0.9"/>
<rect x="586.0" y="269.2" width="5.0" height="5.0" rx="1.2" fill="url(#hg)" stroke="#0a6a66" stroke-width="0.9"/>
<rect x="593.0" y="269.2" width="5.0" height="5.0" rx="1.2" fill="url(#hg)" stroke="#0a6a66" stroke-width="0.9"/>
<rect x="579.2" y="295.0" width="5.0" height="5.0" rx="1.2" fill="url(#hg)" stroke="#0a6a66" stroke-width="0.9"/>
<rect x="586.0" y="295.0" width="5.0" height="5.0" rx="1.2" fill="url(#hg)" stroke="#0a6a66" stroke-width="0.9"/>
<rect x="593.0" y="295.0" width="5.0" height="5.0" rx="1.2" fill="url(#hg)" stroke="#0a6a66" stroke-width="0.9"/>
<text x="560" y="287" font-size="4.5" fill="#3a3aa0" text-anchor="start" font-family="Liberation Serif">C?M</text>
<text x="560" y="295" font-size="4.5" fill="#3a3aa0" text-anchor="start" font-family="Liberation Serif">100n</text>
<text x="597" y="285" font-size="4.5" fill="#3a3aa0" text-anchor="start" font-family="Liberation Serif">C?M</text>
<text x="597" y="292" font-size="4.5" fill="#3a3aa0" text-anchor="start" font-family="Liberation Serif">10uF</text>
<text x="597" y="299" font-size="4.5" fill="#3a3aa0" text-anchor="start" font-family="Liberation Serif">Tant</text>
<text x="551" y="265" font-size="5.5" fill="#c04a3a" text-anchor="middle" font-family="Liberation Serif">VCCO</text>
<text x="551" y="310" font-size="5.5" fill="#c04a3a" text-anchor="middle" font-family="Liberation Serif">GND</text>
<line x1="551" y1="266" x2="551" y2="271.7" stroke="#a04a3a" stroke-width="0.8"/>
<line x1="551" y1="297.5" x2="551" y2="304" stroke="#a04a3a" stroke-width="0.8"/>
<!-- toolbar -->
<rect x="203" y="330" width="873" height="15" fill="#ebe8d8"/>
<rect x="203" y="345" width="873" height="2" fill="#c9c6b8"/>

<!-- ===== PCB DOC ===== -->
<rect x="203" y="347" width="873" height="20" fill="#ebe8d8"/>
<rect x="203" y="367" width="873" height="279" fill="#ffffff"/>
<svg x="203" y="367" width="873" height="279" viewBox="203 367 873 279" overflow="hidden">
<rect x="203" y="367" width="873" height="279" fill="#ffffff"/>
<path d="M150 360H923V610Q923 620.5 912.5 620.5H150Z" fill="#008000"/>
<rect x="150" y="360" width="753.5" height="238.8" fill="#12120e"/>
<line x1="262.5" y1="367" x2="262.5" y2="599" stroke="#6c6c66" stroke-width="1"/>
<line x1="387" y1="367" x2="387" y2="599" stroke="#6c6c66" stroke-width="1"/>
<line x1="510.5" y1="367" x2="510.5" y2="599" stroke="#6c6c66" stroke-width="1"/>
<line x1="634.5" y1="367" x2="634.5" y2="599" stroke="#6c6c66" stroke-width="1"/>
<line x1="758" y1="367" x2="758" y2="599" stroke="#6c6c66" stroke-width="1"/>
<line x1="882" y1="367" x2="882" y2="599" stroke="#6c6c66" stroke-width="1"/>
<line x1="150" y1="400.5" x2="903.5" y2="400.5" stroke="#6c6c66" stroke-width="1"/>
<line x1="150" y1="449.7" x2="903.5" y2="449.7" stroke="#6c6c66" stroke-width="1"/>
<line x1="150" y1="499" x2="903.5" y2="499" stroke="#6c6c66" stroke-width="1"/>
<line x1="150" y1="548.3" x2="903.5" y2="548.3" stroke="#6c6c66" stroke-width="1"/>
<line x1="150" y1="598.3" x2="903.5" y2="598.3" stroke="#6c6c66" stroke-width="1"/>
<rect x="183.2" y="366" width="9.8" height="7.5" fill="#ff0000"/>
<rect x="183.2" y="391.9" width="9.8" height="11.1" fill="#ff0000"/>
<rect x="195.6" y="366" width="9.8" height="7.5" fill="#ff0000"/>
<rect x="195.6" y="391.9" width="9.8" height="11.1" fill="#ff0000"/>
<rect x="208.0" y="366" width="9.8" height="7.5" fill="#ff0000"/>
<rect x="208.0" y="391.9" width="9.8" height="11.1" fill="#ff0000"/>
<rect x="220.4" y="366" width="9.8" height="7.5" fill="#ff0000"/>
<rect x="220.4" y="391.9" width="9.8" height="11.1" fill="#ff0000"/>
<circle cx="205.9" cy="382.6" r="4" fill="none" stroke="#707020" stroke-width="1"/>
<path d="M202.9 379.6L208.9 385.6M208.9 379.6L202.9 385.6" stroke="#707020" stroke-width="0.8"/>
<line x1="231.4" y1="366" x2="231.4" y2="399" stroke="#f2f21a" stroke-width="1.6"/>
<text transform="translate(243.5 402) rotate(-90)" font-size="13.5" font-weight="bold" fill="#f2f21a" letter-spacing="-0.6" textLength="34" lengthAdjust="spacingAndGlyphs">RA40</text>
<rect x="257.8" y="366" width="9.8" height="7.5" fill="#ff0000"/>
<rect x="257.8" y="391.9" width="9.8" height="11.1" fill="#ff0000"/>
<rect x="270.2" y="366" width="9.8" height="7.5" fill="#ff0000"/>
<rect x="270.2" y="391.9" width="9.8" height="11.1" fill="#ff0000"/>
<rect x="282.6" y="366" width="9.8" height="7.5" fill="#ff0000"/>
<rect x="282.6" y="391.9" width="9.8" height="11.1" fill="#ff0000"/>
<rect x="295.0" y="366" width="9.8" height="7.5" fill="#ff0000"/>
<rect x="295.0" y="391.9" width="9.8" height="11.1" fill="#ff0000"/>
<circle cx="280.5" cy="382.6" r="4" fill="none" stroke="#707020" stroke-width="1"/>
<path d="M277.5 379.6L283.5 385.6M283.5 379.6L277.5 385.6" stroke="#707020" stroke-width="0.8"/>
<line x1="306.0" y1="366" x2="306.0" y2="399" stroke="#f2f21a" stroke-width="1.6"/>
<path d="M255.5 366V395.5Q255.5 398.5 252.5 398.5" fill="none" stroke="#f2f21a" stroke-width="1.6"/>
<circle cx="251.5" cy="398.3" r="1.6" fill="#f2f21a"/>
<text transform="translate(318.1 407) rotate(-90)" font-size="13.5" font-weight="bold" fill="#f2f21a" letter-spacing="-0.6" textLength="40" lengthAdjust="spacingAndGlyphs">RA40X</text>
<rect x="332.4" y="366" width="9.8" height="7.5" fill="#ff0000"/>
<rect x="332.4" y="391.9" width="9.8" height="11.1" fill="#ff0000"/>
<rect x="344.8" y="366" width="9.8" height="7.5" fill="#ff0000"/>
<rect x="344.8" y="391.9" width="9.8" height="11.1" fill="#ff0000"/>
<rect x="357.2" y="366" width="9.8" height="7.5" fill="#ff0000"/>
<rect x="357.2" y="391.9" width="9.8" height="11.1" fill="#ff0000"/>
<rect x="369.6" y="366" width="9.8" height="7.5" fill="#ff0000"/>
<rect x="369.6" y="391.9" width="9.8" height="11.1" fill="#ff0000"/>
<circle cx="355.1" cy="382.6" r="4" fill="none" stroke="#707020" stroke-width="1"/>
<path d="M352.1 379.6L358.1 385.6M358.1 379.6L352.1 385.6" stroke="#707020" stroke-width="0.8"/>
<line x1="380.6" y1="366" x2="380.6" y2="399" stroke="#f2f21a" stroke-width="1.6"/>
<path d="M330.1 366V395.5Q330.1 398.5 327.1 398.5" fill="none" stroke="#f2f21a" stroke-width="1.6"/>
<circle cx="326.1" cy="398.3" r="1.6" fill="#f2f21a"/>
<text transform="translate(392.7 402) rotate(-90)" font-size="13.5" font-weight="bold" fill="#f2f21a" letter-spacing="-0.6" textLength="34" lengthAdjust="spacingAndGlyphs">RA40</text>
<rect x="407.0" y="366" width="9.8" height="7.5" fill="#ff0000"/>
<rect x="407.0" y="391.9" width="9.8" height="11.1" fill="#ff0000"/>
<rect x="419.4" y="366" width="9.8" height="7.5" fill="#ff0000"/>
<rect x="419.4" y="391.9" width="9.8" height="11.1" fill="#ff0000"/>
<rect x="431.8" y="366" width="9.8" height="7.5" fill="#ff0000"/>
<rect x="431.8" y="391.9" width="9.8" height="11.1" fill="#ff0000"/>
<rect x="444.2" y="366" width="9.8" height="7.5" fill="#ff0000"/>
<rect x="444.2" y="391.9" width="9.8" height="11.1" fill="#ff0000"/>
<circle cx="429.7" cy="382.6" r="4" fill="none" stroke="#707020" stroke-width="1"/>
<path d="M426.7 379.6L432.7 385.6M432.7 379.6L426.7 385.6" stroke="#707020" stroke-width="0.8"/>
<line x1="455.2" y1="366" x2="455.2" y2="399" stroke="#f2f21a" stroke-width="1.6"/>
<path d="M404.7 366V395.5Q404.7 398.5 401.7 398.5" fill="none" stroke="#f2f21a" stroke-width="1.6"/>
<circle cx="400.7" cy="398.3" r="1.6" fill="#f2f21a"/>
<text transform="translate(467.3 402) rotate(-90)" font-size="13.5" font-weight="bold" fill="#f2f21a" letter-spacing="-0.6" textLength="34" lengthAdjust="spacingAndGlyphs">RA40</text>
<rect x="150" y="424.4" width="331.8" height="49" fill="none" stroke="#a3a322" stroke-width="1.6"/>
<circle cx="469.4" cy="436.4" r="7.4" fill="#c6d2d2"/>
<circle cx="469.4" cy="436.4" r="5.1" fill="#149c84"/>
<line x1="469.4" y1="427.4" x2="469.4" y2="445.4" stroke="#20a040" stroke-width="0.8"/>
<circle cx="469.4" cy="460.7" r="7.4" fill="#c6d2d2"/>
<circle cx="469.4" cy="460.7" r="5.1" fill="#149c84"/>
<line x1="469.4" y1="451.7" x2="469.4" y2="469.7" stroke="#20a040" stroke-width="0.8"/>
<circle cx="444.6" cy="436.4" r="7.4" fill="#c6d2d2"/>
<circle cx="444.6" cy="436.4" r="5.1" fill="#12a2a6"/>
<circle cx="444.6" cy="460.7" r="7.4" fill="#c6d2d2"/>
<circle cx="444.6" cy="460.7" r="5.1" fill="#12a2a6"/>
<circle cx="419.9" cy="436.4" r="7.4" fill="#c6d2d2"/>
<circle cx="419.9" cy="436.4" r="5.1" fill="#12a2a6"/>
<circle cx="419.9" cy="460.7" r="7.4" fill="#c6d2d2"/>
<circle cx="419.9" cy="460.7" r="5.1" fill="#12a2a6"/>
<circle cx="395.1" cy="436.4" r="7.4" fill="#c6d2d2"/>
<circle cx="395.1" cy="436.4" r="5.1" fill="#149c84"/>
<line x1="395.1" y1="427.4" x2="395.1" y2="445.4" stroke="#20a040" stroke-width="0.8"/>
<circle cx="395.1" cy="460.7" r="7.4" fill="#c6d2d2"/>
<circle cx="395.1" cy="460.7" r="5.1" fill="#149c84"/>
<line x1="395.1" y1="451.7" x2="395.1" y2="469.7" stroke="#20a040" stroke-width="0.8"/>
<circle cx="370.4" cy="436.4" r="7.4" fill="#c6d2d2"/>
<circle cx="370.4" cy="436.4" r="5.1" fill="#12a2a6"/>
<circle cx="370.4" cy="460.7" r="7.4" fill="#c6d2d2"/>
<circle cx="370.4" cy="460.7" r="5.1" fill="#12a2a6"/>
<circle cx="345.6" cy="436.4" r="7.4" fill="#c6d2d2"/>
<circle cx="345.6" cy="436.4" r="5.1" fill="#12a2a6"/>
<circle cx="345.6" cy="460.7" r="7.4" fill="#c6d2d2"/>
<circle cx="345.6" cy="460.7" r="5.1" fill="#12a2a6"/>
<circle cx="320.9" cy="436.4" r="7.4" fill="#c6d2d2"/>
<circle cx="320.9" cy="436.4" r="5.1" fill="#149c84"/>
<line x1="320.9" y1="427.4" x2="320.9" y2="445.4" stroke="#20a040" stroke-width="0.8"/>
<circle cx="320.9" cy="460.7" r="7.4" fill="#c6d2d2"/>
<circle cx="320.9" cy="460.7" r="5.1" fill="#149c84"/>
<line x1="320.9" y1="451.7" x2="320.9" y2="469.7" stroke="#20a040" stroke-width="0.8"/>
<circle cx="296.1" cy="436.4" r="7.4" fill="#c6d2d2"/>
<circle cx="296.1" cy="436.4" r="5.1" fill="#12a2a6"/>
<circle cx="296.1" cy="460.7" r="7.4" fill="#c6d2d2"/>
<circle cx="296.1" cy="460.7" r="5.1" fill="#12a2a6"/>
<circle cx="271.4" cy="436.4" r="7.4" fill="#c6d2d2"/>
<circle cx="271.4" cy="436.4" r="5.1" fill="#12a2a6"/>
<circle cx="271.4" cy="460.7" r="7.4" fill="#c6d2d2"/>
<circle cx="271.4" cy="460.7" r="5.1" fill="#12a2a6"/>
<circle cx="246.6" cy="436.4" r="7.4" fill="#c6d2d2"/>
<circle cx="246.6" cy="436.4" r="5.1" fill="#149c84"/>
<line x1="246.6" y1="427.4" x2="246.6" y2="445.4" stroke="#20a040" stroke-width="0.8"/>
<circle cx="246.6" cy="460.7" r="7.4" fill="#c6d2d2"/>
<circle cx="246.6" cy="460.7" r="5.1" fill="#149c84"/>
<line x1="246.6" y1="451.7" x2="246.6" y2="469.7" stroke="#20a040" stroke-width="0.8"/>
<circle cx="221.9" cy="436.4" r="7.4" fill="#c6d2d2"/>
<circle cx="221.9" cy="436.4" r="5.1" fill="#12a2a6"/>
<circle cx="221.9" cy="460.7" r="7.4" fill="#c6d2d2"/>
<circle cx="221.9" cy="460.7" r="5.1" fill="#12a2a6"/>
<circle cx="197.1" cy="436.4" r="7.4" fill="#c6d2d2"/>
<circle cx="197.1" cy="436.4" r="5.1" fill="#12a2a6"/>
<circle cx="197.1" cy="460.7" r="7.4" fill="#c6d2d2"/>
<circle cx="197.1" cy="460.7" r="5.1" fill="#12a2a6"/>
<circle cx="469.4" cy="460.7" r="7.4" fill="#d8d8a0"/><circle cx="469.4" cy="460.7" r="5" fill="#20a070"/>
<path d="M462 453.3L477 468.1M477 453.3L462 468.1" stroke="#a0a040" stroke-width="0.8"/>
<text x="245" y="426" font-size="16" font-weight="bold" fill="#f2f21a" text-anchor="middle">20</text>
<text x="370" y="426" font-size="16" font-weight="bold" fill="#f2f21a" text-anchor="middle">10</text>
<text transform="translate(297 474) rotate(180)" font-size="17" font-weight="bold" fill="#f2f21a" text-anchor="middle">15</text>
<text transform="translate(420 474) rotate(180)" font-size="16" font-weight="bold" fill="#f2f21a" text-anchor="middle">5</text>
<text transform="translate(489 442) scale(-1 1)" font-size="18" font-weight="bold" fill="#a8a830" text-anchor="middle">2</text>
<text transform="translate(489 467) scale(-1 1)" font-size="18" font-weight="bold" fill="#a8a830" text-anchor="middle">1</text>
<text x="532.5" y="399.5" font-size="13" font-weight="bold" fill="#f2f21a" text-anchor="middle" letter-spacing="0.2">HDR603</text>
<rect x="524.3" y="405.3" width="24.2" height="48" fill="none" stroke="#f2f21a" stroke-width="2"/>
<circle cx="536.5" cy="417" r="7" fill="#c6d2d2"/><circle cx="536.5" cy="417" r="4.8" fill="#12a2a6"/>
<rect x="529.5" y="436" width="14" height="14" fill="#d8d8b0"/>
<path d="M536.5 438L541.5 443L536.5 448L531.5 443Z" fill="#18a880"/>
<line x1="552" y1="453" x2="596" y2="479" stroke="#5a5a55" stroke-width="1"/>
<line x1="839.7" y1="367" x2="759" y2="467" stroke="#55554e" stroke-width="0.9"/>
<line x1="845.4" y1="367" x2="765" y2="467" stroke="#55554e" stroke-width="0.9"/>
<line x1="859.8" y1="367" x2="783.7" y2="467" stroke="#55554e" stroke-width="0.9"/>
<line x1="868.4" y1="367" x2="789.4" y2="467" stroke="#55554e" stroke-width="0.9"/>
<circle cx="676" cy="407.4" r="5" fill="#ff0d0d"/>
<text x="616" y="463.5" font-size="12.5" fill="#dede44" stroke="#dede44" stroke-width="0.35" textLength="34" lengthAdjust="spacingAndGlyphs">J700</text>
<rect x="594.5" y="466.5" width="302" height="154" fill="#ffffff" fill-opacity="0.61"/>
<line x1="634.5" y1="466.5" x2="634.5" y2="599" stroke="#d0d0d0" stroke-width="1" stroke-opacity="0.6"/>
<line x1="758" y1="466.5" x2="758" y2="599" stroke="#d0d0d0" stroke-width="1" stroke-opacity="0.6"/>
<line x1="882" y1="466.5" x2="882" y2="599" stroke="#d0d0d0" stroke-width="1" stroke-opacity="0.6"/>
<line x1="594.5" y1="499" x2="896.5" y2="499" stroke="#d0d0d0" stroke-width="1" stroke-opacity="0.6"/>
<line x1="594.5" y1="548.3" x2="896.5" y2="548.3" stroke="#d0d0d0" stroke-width="1" stroke-opacity="0.6"/>
<circle cx="623.2" cy="495.4" r="23" fill="#cbcbcb"/><circle cx="623.2" cy="495.4" r="16" fill="#a9d2da"/>
<circle cx="867" cy="495.4" r="23" fill="#cbcbcb"/><circle cx="867" cy="495.4" r="16" fill="#a9d2da"/>
<circle cx="691" cy="481.8" r="8.3" fill="#c9cfcf"/>
<circle cx="718.4" cy="481.8" r="8.3" fill="#c9cfcf"/>
<circle cx="745.6" cy="481.8" r="8.3" fill="#c9cfcf"/>
<circle cx="772" cy="481.8" r="8.3" fill="#c9cfcf"/>
<rect x="791" y="473.8" width="16" height="16" fill="#c9cfcf"/>
<circle cx="704.9" cy="509.3" r="8.3" fill="#c9cfcf"/>
<circle cx="731.4" cy="509.3" r="8.3" fill="#c9cfcf"/>
<circle cx="758.8" cy="509.3" r="8.3" fill="#c9cfcf"/>
<circle cx="785.7" cy="509.3" r="8.3" fill="#c9cfcf"/>
<path d="M595 467H896V589H595Z M677.4 467V558.5M813.7 467V558.5M595 558.5H896" fill="none" stroke="#eeee9a" stroke-width="1.3"/>
<path d="M651 589Q658.7 589 658.7 597V646M838.5 589Q831 589 831 597V646" fill="none" stroke="#eeee9a" stroke-width="1.3"/>
<text transform="translate(687.5 492.5) scale(1 -1)" font-size="14" fill="#e6e69a" text-anchor="middle">5</text>
<text x="802.5" y="502.5" font-size="14" fill="#e6e69a" text-anchor="middle">1</text>
<text x="704.5" y="530" font-size="14" fill="#e6e69a" text-anchor="middle">6</text>
<text x="785.5" y="530" font-size="14" fill="#e6e69a" text-anchor="middle">9</text>
<line x1="823.9" y1="367" x2="726.2" y2="495.4" stroke="#e01010" stroke-width="1.6"/>
<circle cx="726.2" cy="495.4" r="4.5" fill="#ff0a0a"/>
<circle cx="745" cy="589" r="20" fill="none" stroke="#e8e890" stroke-width="0.9"/>
<path d="M722 566L768 612M768 566L722 612" stroke="#e8e890" stroke-width="0.9"/>
<line x1="745" y1="555" x2="745" y2="646" stroke="#f6f6f6" stroke-width="1"/>
<line x1="710" y1="589" x2="780" y2="589" stroke="#f6f6f6" stroke-width="1"/>
<path d="M742.5 585V598.5L745.5 595.5L748 601L750 600L747.5 594.5H751.5Z" fill="#ffffff" stroke="#505050" stroke-width="0.8"/>
</svg>
<!-- scrollbar -->
<rect x="203" y="646" width="873" height="12" fill="#f3f3ef"/>
<!-- layer tabs -->
<rect x="203" y="658" width="873" height="15" fill="#ebe8d8"/>

<path d="M151.0 101.0C148.8 101.2 144.5 100.5 137.7 102.1C130.9 103.7 118.1 107.0 110.0 110.8C101.9 114.5 95.5 118.8 89.2 124.6C82.9 130.4 77.1 137.3 71.9 145.4C66.7 153.5 61.8 163.8 58.0 173.0C54.2 182.2 52.0 190.4 49.4 200.8C46.8 211.2 44.2 223.9 42.5 235.4C40.8 246.9 39.6 259.2 39.3 270.0C39.0 280.8 40.1 292.8 40.5 300.0C40.9 307.2 41.6 310.8 41.8 313.0C42.3 310.0 43.7 300.4 45.0 295.0C46.3 289.6 47.2 287.4 49.4 280.4C51.6 273.3 54.2 261.9 58.0 252.7C61.8 243.5 66.7 233.7 71.9 225.0C77.1 216.3 82.9 207.7 89.2 200.8C95.5 193.9 102.5 187.8 110.0 183.5C117.5 179.2 127.4 176.6 134.2 174.8C141.0 173.1 148.2 173.3 151.0 173.0Z" fill="#ff0000"/>
<rect x="156" y="101" width="15.3" height="72" fill="#ff0000"/>
<rect x="174.7" y="101" width="8" height="72" fill="#ff0000"/>
<path d="M41.8 313.0C42.8 318.3 45.5 334.9 48.0 344.7C50.5 354.4 53.3 362.6 56.8 371.5C60.3 380.4 64.2 389.7 69.2 398.3C74.2 406.9 80.3 415.9 87.0 423.0C93.7 430.1 101.9 436.1 109.4 440.8C116.9 445.5 124.9 448.8 131.8 451.0C138.7 453.2 147.8 453.7 151.0 454.2L151 381.8L201.5 490L151 599.7L151 526.6C149.3 526.5 146.1 527.3 140.7 525.7C135.2 524.1 126.5 521.6 118.3 516.8C110.1 512.0 99.7 504.5 91.5 496.7C83.3 488.9 75.9 480.3 69.2 469.9C62.5 459.5 55.9 447.5 51.3 434.1C46.7 420.7 43.7 404.3 41.6 389.4C39.5 374.5 38.9 357.4 38.9 344.7C38.9 332.0 41.3 318.3 41.8 313.0Z" fill="#ff0000"/>
<!-- title bar controls -->
<path d="M169 5.5H176L172.5 9Z" fill="#ffffff"/>
<circle cx="184" cy="7" r="3" fill="#2a2a40"/><path d="M182.5 8.5L186 5" stroke="#e0e040" stroke-width="1.2"/>
<path d="M192.5 4.5L197.5 9.5M197.5 4.5L192.5 9.5" stroke="#dde6fb" stroke-width="1.6"/>
<!-- include row -->
<text x="7" y="24" font-size="8" fill="#202020" textLength="24" lengthAdjust="spacingAndGlyphs">Include</text>
<text x="34.5" y="24" font-size="8" fill="#3838a8" textLength="58.5" lengthAdjust="spacingAndGlyphs" text-decoration="underline">all types of objects</text>
<path d="M177 20L189 14.5L196 21L183 28Z" fill="#1f9a2a" stroke="#0c5a12" stroke-width="0.6"/>
<path d="M180 21L185 18.5L187 21L182 23.5Z" fill="#0a3a10"/>
<!-- left bottom -->
<text x="3.5" y="657.5" font-size="8" fill="#202020" textLength="64" lengthAdjust="spacingAndGlyphs">No objects selected</text>
<path d="M2 661.5H64L68 672.5H6Z" fill="#a3a195"/>
<text x="10" y="670.5" font-size="8" font-weight="bold" fill="#f4f4f0" textLength="52" lengthAdjust="spacingAndGlyphs">PCB Inspector</text>
<path d="M70 672.5L74 662H106L110 672.5Z" fill="#f0efe6" stroke="#8a887c" stroke-width="0.7"/>
<text x="77" y="670.5" font-size="8" fill="#202020" textLength="26" lengthAdjust="spacingAndGlyphs">Projects</text>
<path d="M112 672.5L116 662H133L137 672.5Z" fill="#f0efe6" stroke="#8a887c" stroke-width="0.7"/>
<text x="117.5" y="670.5" font-size="8" fill="#202020" textLength="13" lengthAdjust="spacingAndGlyphs">PCB</text>
<rect x="0" y="672.5" width="203" height="1" fill="#8a887c"/>
<text x="4" y="684" font-size="8" fill="#303030" textLength="67" lengthAdjust="spacingAndGlyphs">X:2450mil Y:-2960mil</text>
<text x="79.5" y="684" font-size="8" fill="#303030" textLength="27.5" lengthAdjust="spacingAndGlyphs">Grid:5mil</text>
<!-- schematic tab -->
<rect x="206" y="6" width="98" height="14.5" rx="1.5" fill="#f5f4ec" stroke="#d6d3c4" stroke-width="0.8"/>
<rect x="208.5" y="8.5" width="9.5" height="7.5" rx="1" fill="#d8b020"/>
<rect x="209.5" y="9.5" width="5" height="3" fill="#f8e890"/>
<text x="220.5" y="16" font-size="8.2" fill="#252525" textLength="81" lengthAdjust="spacingAndGlyphs">PCB_RS2321D.SchDoc *</text>
<!-- schematic frame labels -->
<text x="1009.5" y="86" font-size="5" fill="#505050" text-anchor="middle">3</text>
<text x="1009.5" y="229" font-size="5" fill="#505050" text-anchor="middle">C</text>
<!-- schematic scrollbar arrows -->
<path d="M210.5 322L208 324.5L210.5 327" stroke="#3858b0" stroke-width="1.5" fill="none"/>
<path d="M1069 322L1071.5 324.5L1069 327" stroke="#3858b0" stroke-width="1.5" fill="none"/>
<!-- toolbar icons -->
<path d="M984 341L990.5 334.5" stroke="#7a7a8a" stroke-width="2"/>
<rect x="981" y="341" width="3.5" height="2" fill="#6868d8"/><rect x="987" y="341" width="3.5" height="2" fill="#6868d8"/>
<rect x="996.5" y="332" width="0.8" height="12" fill="#d8d5c5"/>
<path d="M999 335L1001.5 337.5L1004 335M999 338.5L1001.5 341L1004 338.5" stroke="#a0a020" stroke-width="0.9" fill="none"/>
<path d="M1005 335.5L1008 338L1005 340.5Z" fill="#404040"/>
<path d="M1009.5 334.5H1016L1013.5 338V341H1012V338Z" fill="#404040"/>
<rect x="1019.5" y="332" width="0.8" height="12" fill="#d8d5c5"/>
<text x="1023" y="341.5" font-size="8" fill="#8a8880" textLength="39" lengthAdjust="spacingAndGlyphs">Mask Level</text>
<rect x="1064" y="332" width="0.8" height="12" fill="#d8d5c5"/>
<text x="1067" y="341.5" font-size="8" fill="#8a8880" textLength="11" lengthAdjust="spacingAndGlyphs">Cle</text>
<!-- pcb tab -->
<rect x="206" y="350" width="104" height="14.5" rx="1.5" fill="#f5f4ec" stroke="#d6d3c4" stroke-width="0.8"/>
<rect x="208.5" y="353" width="10" height="7.5" rx="1" fill="#1f7a40"/>
<rect x="209.5" y="354" width="8" height="2" fill="#3aa060"/>
<text x="221" y="360.5" font-size="8.2" fill="#252525" textLength="86" lengthAdjust="spacingAndGlyphs">PortSwitcher1D.PCBDOC *</text>

<rect x="203" y="646" width="873" height="12" fill="#f7f7f3"/>
<rect x="203" y="646" width="873" height="1" fill="#eeeee8"/>
<rect x="204" y="646.5" width="11" height="11" rx="2" fill="#c6d6f8"/>
<path d="M210.5 649L208 651.8L210.5 654.5" stroke="#3858b0" stroke-width="1.5" fill="none"/>
<rect x="275" y="646.5" width="12" height="11" rx="2" fill="#c6d6f8"/>
<rect x="1064" y="646.5" width="12" height="11" rx="2" fill="#c6d6f8"/>
<path d="M1069 649L1071.5 651.8L1069 654.5" stroke="#3858b0" stroke-width="1.5" fill="none"/>
<rect x="203" y="671.5" width="873" height="1.5" fill="#a8a598"/>
<rect x="204.7" y="661" width="17.5" height="8.5" fill="#ff0000"/>
<rect x="224" y="661" width="12" height="8.5" fill="#dcdad0" stroke="#b8b6aa" stroke-width="0.6"/>
<text x="226" y="668" font-size="6.5" fill="#a8a8a0">LS</text>
<path d="M239 659L243 671.5H297L301 659" fill="#fafaf6" stroke="#8a887c" stroke-width="0.8"/>
<path d="M302.5 659L300.5 671.5H363.5L365.5 659Z" fill="#f4f3ee" stroke="#8a887c" stroke-width="0.8"/>
<path d="M367.5 659L365.5 671.5H426.5L428.5 659Z" fill="#f4f3ee" stroke="#8a887c" stroke-width="0.8"/>
<path d="M430.5 659L428.5 671.5H486.5L488.5 659Z" fill="#f4f3ee" stroke="#8a887c" stroke-width="0.8"/>
<path d="M490.5 659L488.5 671.5H546.5L548.5 659Z" fill="#f4f3ee" stroke="#8a887c" stroke-width="0.8"/>
<path d="M550.5 659L548.5 671.5H609.0L611.0 659Z" fill="#f4f3ee" stroke="#8a887c" stroke-width="0.8"/>
<path d="M613.0 659L611.0 671.5H668.5L670.5 659Z" fill="#f4f3ee" stroke="#8a887c" stroke-width="0.8"/>
<path d="M672.5 659L670.5 671.5H732.5L734.5 659Z" fill="#f4f3ee" stroke="#8a887c" stroke-width="0.8"/>
<path d="M736.5 659L734.5 671.5H786.5L788.5 659Z" fill="#f4f3ee" stroke="#8a887c" stroke-width="0.8"/>
<rect x="246" y="662.5" width="6" height="6" fill="#ff0000" stroke="#606060" stroke-width="0.5"/>
<text x="255" y="669" font-size="8.2" font-weight="bold" fill="#202020" textLength="42" lengthAdjust="spacingAndGlyphs">Top Layer</text>
<rect x="307" y="662.5" width="6" height="6" fill="#008000" stroke="#606060" stroke-width="0.5"/>
<text x="316" y="669" font-size="8" fill="#303060" textLength="45" lengthAdjust="spacingAndGlyphs">InternalPlane1</text>
<rect x="372" y="662.5" width="6" height="6" fill="#800000" stroke="#606060" stroke-width="0.5"/>
<text x="381" y="669" font-size="8" fill="#303060" textLength="43" lengthAdjust="spacingAndGlyphs">InternalPlane2</text>
<rect x="435" y="662.5" width="6" height="6" fill="#0000ff" stroke="#606060" stroke-width="0.5"/>
<text x="444" y="669" font-size="8" fill="#303060" textLength="40" lengthAdjust="spacingAndGlyphs">Bottom Layer</text>
<rect x="495" y="662.5" width="6" height="6" fill="#ff00ff" stroke="#606060" stroke-width="0.5"/>
<text x="504" y="669" font-size="8" fill="#303060" textLength="40" lengthAdjust="spacingAndGlyphs">Board Outline</text>
<rect x="555" y="662.5" width="6" height="6" fill="#008000" stroke="#606060" stroke-width="0.5"/>
<text x="564" y="669" font-size="8" fill="#303060" textLength="42.5" lengthAdjust="spacingAndGlyphs">Mechanical 15</text>
<rect x="617.5" y="662.5" width="6" height="6" fill="#ffff00" stroke="#606060" stroke-width="0.5"/>
<text x="626.5" y="669" font-size="8" fill="#303060" textLength="39.5" lengthAdjust="spacingAndGlyphs">Top Overlay</text>
<rect x="677" y="662.5" width="6" height="6" fill="#808000" stroke="#606060" stroke-width="0.5"/>
<text x="686" y="669" font-size="8" fill="#303060" textLength="44" lengthAdjust="spacingAndGlyphs">Bottom Overlay</text>
<rect x="741" y="662.5" width="6" height="6" fill="#c0c0c0" stroke="#606060" stroke-width="0.5"/>
<text x="750" y="669" font-size="8" fill="#303060" textLength="34" lengthAdjust="spacingAndGlyphs">Multi-Layer</text>
<path d="M999 661.5L1001.5 664L1004 661.5M999 665L1001.5 667.5L1004 665" stroke="#a0a020" stroke-width="0.9" fill="none"/>
<path d="M1005 662L1008 664.5L1005 667Z" fill="#404040"/><path d="M1009.5 661H1016L1013.5 664.5V667.5H1012V664.5Z" fill="#404040"/>
<rect x="1019.5" y="659" width="0.8" height="12" fill="#d0cdbd"/>
<text x="1023" y="668.5" font-size="8" fill="#8a8880" textLength="39" lengthAdjust="spacingAndGlyphs">Mask Level</text>
<rect x="1064" y="659" width="0.8" height="12" fill="#d0cdbd"/>
<text x="1067" y="668.5" font-size="8" fill="#8a8880" textLength="11" lengthAdjust="spacingAndGlyphs">Cle</text>
<rect x="277" y="674" width="0.8" height="13" fill="#c0bdb0"/>
<text x="282" y="683.5" font-size="8" fill="#303030" textLength="84" lengthAdjust="spacingAndGlyphs">Moving Component 1 of 9</text>
<rect x="554" y="674" width="0.8" height="13" fill="#c0bdb0"/>
<text x="562" y="683.5" font-size="8" fill="#303030" textLength="234" lengthAdjust="spacingAndGlyphs">Dynamic Reconnector - Moving 1 Object(s) in Dynamic Connect Mode (P</text>
<rect x="798" y="674" width="0.8" height="13" fill="#c8c5b8"/>
<rect x="830" y="674" width="0.8" height="13" fill="#c8c5b8"/>
<rect x="890" y="674" width="0.8" height="13" fill="#c8c5b8"/>
<rect x="922" y="674" width="0.8" height="13" fill="#c8c5b8"/>
<rect x="966" y="674" width="0.8" height="13" fill="#c8c5b8"/>
<rect x="1040" y="674" width="0.8" height="13" fill="#c8c5b8"/>
<rect x="1066" y="674" width="0.8" height="13" fill="#c8c5b8"/>
<text x="802" y="683.5" font-size="8" fill="#8c8a84" textLength="26" lengthAdjust="spacingAndGlyphs">System</text>
<rect x="802" y="684.5" width="4" height="0.6" fill="#8c8a84"/>
<text x="835" y="683.5" font-size="8" fill="#8c8a84" textLength="53" lengthAdjust="spacingAndGlyphs">Design Compiler</text>
<rect x="835" y="684.5" width="4" height="0.6" fill="#8c8a84"/>
<text x="898" y="683.5" font-size="8" fill="#8c8a84" textLength="15" lengthAdjust="spacingAndGlyphs">Help</text>
<rect x="898" y="684.5" width="4" height="0.6" fill="#8c8a84"/>
<text x="925" y="683.5" font-size="8" fill="#8c8a84" textLength="38" lengthAdjust="spacingAndGlyphs">Instruments</text>
<rect x="925" y="684.5" width="4" height="0.6" fill="#8c8a84"/>
<text x="970" y="683.5" font-size="8" fill="#8c8a84" textLength="68" lengthAdjust="spacingAndGlyphs">Situs Debug Console</text>
<rect x="970" y="684.5" width="4" height="0.6" fill="#8c8a84"/>
<text x="1046" y="683.5" font-size="8" fill="#8c8a84" textLength="16" lengthAdjust="spacingAndGlyphs">PCB</text>
<rect x="1046" y="684.5" width="4" height="0.6" fill="#8c8a84"/>
</svg>
</body></html>
